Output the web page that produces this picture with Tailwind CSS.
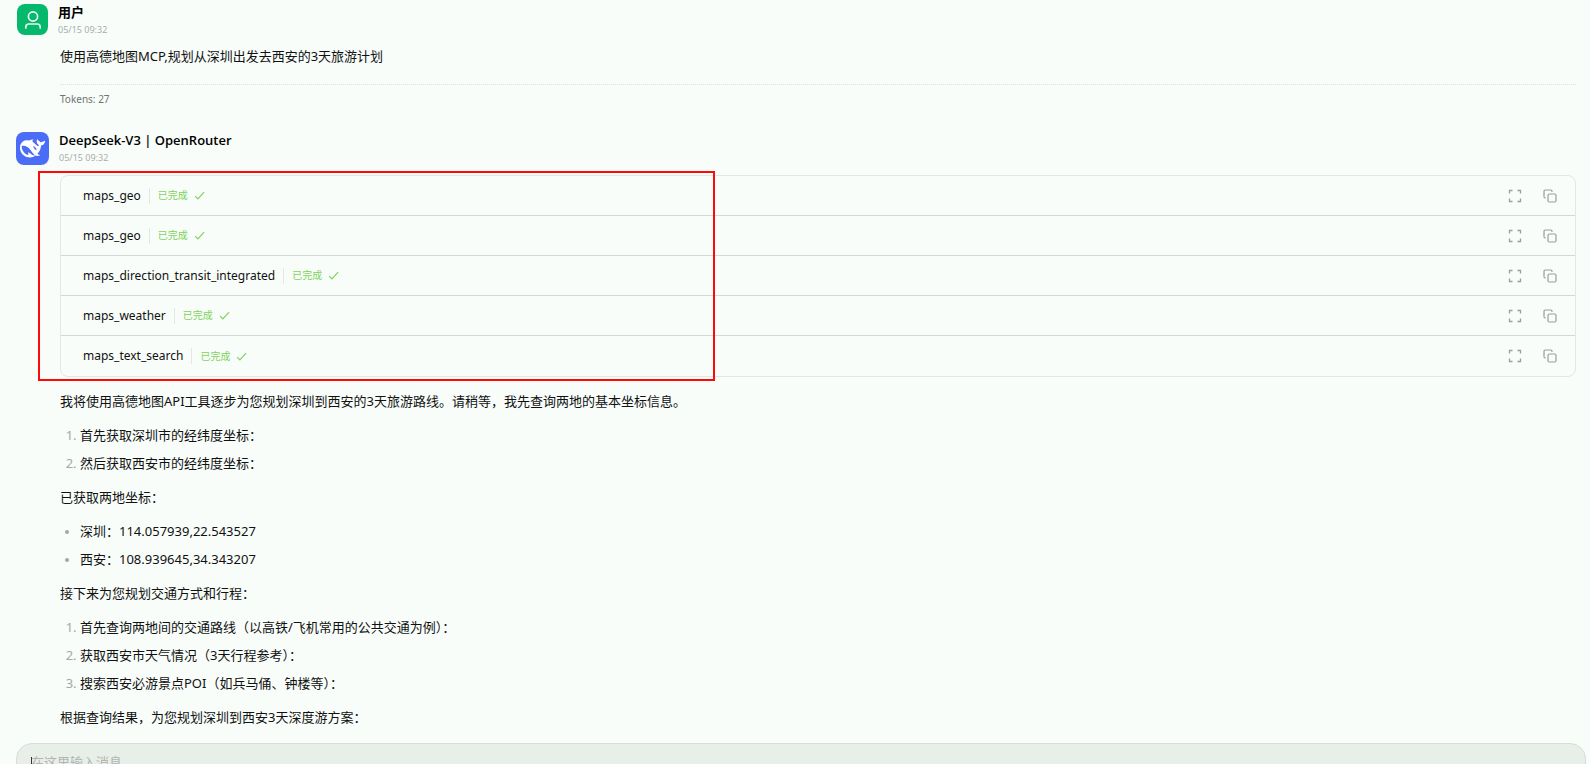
<!DOCTYPE html>
<html lang="zh-CN">
<head>
    <meta charset="UTF-8">
    <meta name="viewport" content="width=device-width, initial-scale=1.0">
    <title>DeepSeek-V3 | OpenRouter</title>
    <script src="https://cdn.jsdelivr.net/npm/@tailwindcss/browser@4"></script>
</head>
<body class="h-screen overflow-hidden bg-[#f8fdfa] text-[13px] text-[#111] font-['Noto_Sans','Noto_Sans_CJK_SC',sans-serif]">
    <!-- Icons -->
    <svg class="hidden">
        <symbol id="icon-check" viewBox="0 0 24 24">
            <path d="M2.500 13.500l6 6L22 4.500" fill="none" stroke="currentColor" stroke-width="2.600" />
        </symbol>
        <symbol id="icon-expand" viewBox="0 0 14 14">
            <path d="M1.500 4.500v-3h3M9.500 1.500h3v3M12.500 9.500v3h-3M4.500 12.500h-3v-3" fill="none" stroke="currentColor" stroke-width="1.300" />
        </symbol>
        <symbol id="icon-copy" viewBox="0 0 14 14">
            <rect x="5" y="5" width="8" height="8" rx="1.500" fill="none" stroke="currentColor" stroke-width="1.200" />
            <path d="M2.800 9H2.200A1.200 1.200 0 0 1 1 7.800V2.200A1.200 1.200 0 0 1 2.200 1h5.600A1.200 1.200 0 0 1 9 2.200v.8" fill="none" stroke="currentColor" stroke-width="1.200" />
        </symbol>
    </svg>

    <div class="flex h-full flex-col">
        <main class="flex-1 overflow-hidden pl-4 pr-3">
            <!-- User message -->
            <article class="pt-1">
                <header class="flex gap-2.5">
                    <div class="ml-px flex size-[31px] items-center justify-center rounded-lg bg-[#06b86c]">
                        <svg class="size-5" viewBox="0 0 20 20" fill="none" stroke="#e6f8ef" stroke-width="1.700" stroke-linecap="round">
                            <circle cx="10" cy="6.500" r="4.600" />
                            <path d="M2.800 18v-1a3 3 0 0 1 3-3h8.400a3 3 0 0 1 3 3v1" />
                        </svg>
                    </div>
                    <div>
                        <h2 class="text-[13px] leading-4 font-bold text-black">用户</h2>
                        <time class="block text-[9px] leading-5 text-[#a9adaa]">05/15 09:32</time>
                    </div>
                </header>
                <div class="ml-11 pr-0.5">
                    <p class="mt-1 leading-6">使用高德地图MCP,规划从深圳出发去西安的3天旅游计划</p>
                    <div class="mt-4 border-t border-dotted border-[#dde3df] pt-1.5 text-[10px] leading-4 text-[#707471]">Tokens: 27</div>
                </div>
            </article>

            <!-- Assistant message -->
            <article class="pt-[25px]">
                <header class="flex gap-2.5">
                    <div class="flex size-[33px] items-center justify-center rounded-lg bg-[#4a6cf7]">
                        <svg class="size-[25px]" viewBox="0 0 24 24" fill="#fff">
                            <path d="M23.748 4.482c-.254-.124-.364.113-.512.234-.051.039-.094.090-.137.136-.372.397-.806.657-1.373.626-.829-.046-1.537.214-2.163.848-.133-.782-.575-1.248-1.247-1.548-.352-.156-.708-.311-.955-.650-.172-.241-.219-.510-.305-.774-.055-.160-.110-.323-.293-.350-.200-.031-.278.136-.356.276-.313.572-.434 1.202-.422 1.840.027 1.436.633 2.580 1.838 3.393.137.093.172.187.129.323-.082.280-.180.552-.266.833-.055.179-.137.217-.329.140a5.526 5.526 0 0 1-1.736-1.180c-.857-.828-1.631-1.742-2.597-2.458a11.365 11.365 0 0 0-.689-.471c-.985-.957.130-1.743.388-1.836.270-.098.093-.432-.779-.428-.872.004-1.670.295-2.687.684a3.055 3.055 0 0 1-.465.137 9.597 9.597 0 0 0-2.883-.102c-1.885.210-3.390 1.102-4.497 2.623C.082 8.606-.231 10.684.152 12.850c.403 2.284 1.569 4.175 3.360 5.653 1.858 1.533 3.997 2.284 6.438 2.140 1.482-.085 3.133-.284 4.994-1.860.470.234.962.327 1.780.397.630.059 1.236-.030 1.705-.128.735-.156.684-.837.419-.961-2.155-1.004-1.682-.595-2.113-.926 1.096-1.296 2.746-2.642 3.392-7.003.050-.347.007-.565 0-.845-.004-.170.035-.237.230-.256a4.173 4.173 0 0 0 1.545-.475c1.396-.763 1.960-2.015 2.093-3.517.020-.230-.004-.467-.247-.588zM11.581 18c-2.089-1.642-3.102-2.183-3.520-2.160-.392.024-.321.471-.235.763.090.288.207.486.371.739.114.167.192.416-.113.603-.673.416-1.842-.140-1.897-.167-1.361-.802-2.500-1.860-3.301-3.307-.774-1.393-1.224-2.887-1.298-4.482-.020-.386.093-.522.477-.592a4.696 4.696 0 0 1 1.529-.039c2.132.312 3.946 1.265 5.468 2.774.868.860 1.525 1.887 2.202 2.891.720 1.066 1.494 2.082 2.480 2.914.348.292.625.514.891.677-.802.090-2.140.110-3.054-.614zm1-6.440a.306.306 0 0 1 .415-.287.302.302 0 0 1 .200.288.306.306 0 0 1-.310.307.303.303 0 0 1-.304-.308zm3.110 1.596c-.200.081-.399.151-.590.160a1.245 1.245 0 0 1-.798-.254c-.274-.230-.470-.358-.552-.758a1.730 1.730 0 0 1 .016-.588c.070-.327-.008-.537-.239-.727-.187-.156-.426-.199-.688-.199a.559.559 0 0 1-.254-.078.253.253 0 0 1-.114-.358c.028-.054.160-.186.192-.210.356-.202.767-.136 1.146.016.352.144.618.408 1.001.782.391.451.462.576.685.914.176.265.336.537.445.848.067.195-.019.354-.250.452z" />
                        </svg>
                    </div>
                    <div>
                        <h2 class="font-['Open_Sans','Noto_Sans',sans-serif] text-[13px] leading-4 font-semibold text-black">DeepSeek-V3 | OpenRouter</h2>
                        <time class="block text-[9px] leading-5 text-[#a9adaa]">05/15 09:32</time>
                    </div>
                </header>

                <div class="ml-11 pr-0.5">
                    <!-- Tool calls -->
                    <section class="relative mt-[7px]">
                        <ul id="tools" class="divide-y divide-[#d3dad6] rounded-lg border border-[#e2e8e4]"></ul>
                        <div class="pointer-events-none absolute -top-1 -bottom-1 -left-[22px] w-[677px] border-2 border-[#fe0808]"></div>
                    </section>

                    <p class="mt-3 leading-6">我将使用高德地图API工具逐步为您规划深圳到西安的3天旅游路线。请稍等，我先查询两地的基本坐标信息。</p>
                    <ol class="mt-2.5 list-decimal space-y-1 pl-5 leading-6 marker:text-[#a3a8a5]">
                        <li>首先获取深圳市的经纬度坐标：</li>
                        <li>然后获取西安市的经纬度坐标：</li>
                    </ol>
                    <p class="mt-2.5 leading-6">已获取两地坐标：</p>
                    <ul class="mt-2.5 list-disc space-y-1 pl-5 leading-6 marker:text-[11px] marker:text-[#a3a8a5]">
                        <li>深圳：114.057939,22.543527</li>
                        <li>西安：108.939645,34.343207</li>
                    </ul>
                    <p class="mt-2.5 leading-6">接下来为您规划交通方式和行程：</p>
                    <ol class="mt-2.5 list-decimal space-y-1 pl-5 leading-6 marker:text-[#a3a8a5]">
                        <li>首先查询两地间的交通路线（以高铁/飞机常用的公共交通为例）：</li>
                        <li>获取西安市天气情况（3天行程参考）：</li>
                        <li>搜索西安必游景点POI（如兵马俑、钟楼等）：</li>
                    </ol>
                    <p class="mt-2.5 leading-6">根据查询结果，为您规划深圳到西安3天深度游方案：</p>
                </div>
            </article>
        </main>

        <!-- Input bar -->
        <footer class="relative h-[21px] shrink-0 overflow-hidden pl-4 pr-1">
            <textarea aria-label="消息" placeholder="在这里输入消息" class="block h-20 w-full resize-none rounded-2xl border border-[#d6ddd8] bg-[#e8eee8] px-3.5 py-1.5 leading-6 outline-none placeholder:text-[#b0b6b1]"></textarea>
            <!-- caret -->
            <span class="pointer-events-none absolute top-3.5 left-[31px] h-4 w-px bg-[#333]"></span>
        </footer>
    </div>

    <script>
        const tools = ['maps_geo', 'maps_geo', 'maps_direction_transit_integrated', 'maps_weather', 'maps_text_search'];

        document.getElementById('tools').innerHTML = tools.map(name => `
            <li class="flex h-10 items-center pl-[22px] pr-[18px]">
                <span class="text-xs">${name}</span>
                <span class="ml-2 flex h-4 items-center gap-1.5 border-l border-[#e2e8e4] pl-2 text-[10px] text-[#7fd35c]">
                    已完成
                    <svg class="size-[11px]"><use href="#icon-check" /></svg>
                </span>
                <span class="ml-auto flex gap-[21px] text-[#9a9f9c]">
                    <button type="button" aria-label="展开" class="block"><svg class="size-3.5"><use href="#icon-expand" /></svg></button>
                    <button type="button" aria-label="复制" class="block"><svg class="size-3.5"><use href="#icon-copy" /></svg></button>
                </span>
            </li>`).join('');
    </script>
</body>
</html>
